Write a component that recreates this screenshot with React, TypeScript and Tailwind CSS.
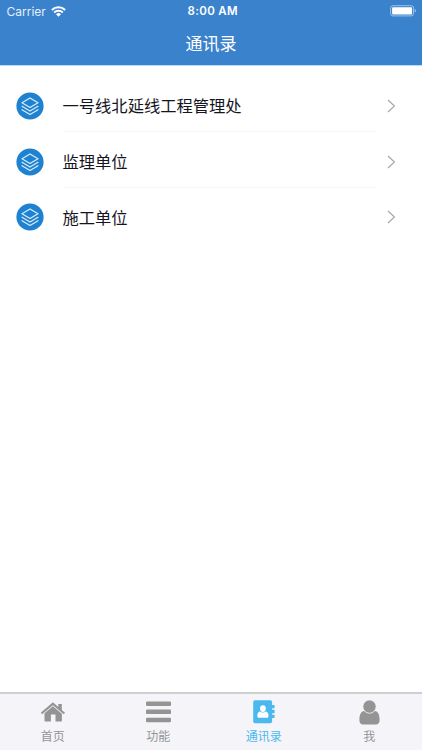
import type { ReactNode } from "react";

const DEPARTMENTS = ["一号线北延线工程管理处", "监理单位", "施工单位"];

function WifiIcon() {
  return (
    <svg width="15" height="11" viewBox="0 0 15 11" fill="none" stroke="#fff">
      <path d="M.9 4a9.3 9.3 0 0 1 13.2 0" strokeWidth="2.1" />
      <path d="M3.2 6.5a6.1 6.1 0 0 1 8.6 0" strokeWidth="1.9" />
      <path d="M7.5 10.7 5 8.3a3.5 3.5 0 0 1 5 0z" fill="#fff" stroke="none" />
    </svg>
  );
}

function BatteryIcon() {
  return (
    <svg width="27" height="12" viewBox="0 0 27 12" fill="none">
      <rect x="0.6" y="0.7" width="23" height="10.2" rx="2.4" stroke="#a5c8ee" strokeWidth="0.9" />
      <rect x="2.1" y="2.2" width="20" height="7.2" rx="0.9" fill="#fff" />
      <path d="M24.7 4.1c1.7.5 1.7 2.9 0 3.4z" fill="#a5c8ee" />
    </svg>
  );
}

function LayersIcon() {
  return (
    <svg width="28" height="28" viewBox="0 0 28 28" fill="none">
      <circle cx="14" cy="14" r="13.6" fill="#1f82d0" />
      <g stroke="#d9edfb" strokeWidth="1.2" strokeLinejoin="round" strokeLinecap="round">
        <path d="M14 5.9 22 10.7 14 15.5 6 10.7z" />
        <path d="M6 14.3 14 19.1l8-4.8" />
        <path d="M6 17.7 14 22.5l8-4.8" />
      </g>
    </svg>
  );
}

function ChevronIcon() {
  return (
    <svg width="9" height="14" viewBox="0 0 9 14" fill="none" stroke="#a8a8a8" strokeWidth="1.2">
      <path d="M1 1l6.4 6L1 13" />
    </svg>
  );
}

function HomeIcon() {
  return (
    <svg width="24" height="20" viewBox="0 0 24 20" fill="#949494">
      <path d="M11.9.3 17.3 4.9V1.9h3.5v6L24 10.7 22.8 12.3 11.9 3.2 1.1 12.3-.1 10.7z" />
      <path d="M11.9 4.2 20.9 11.7v6.8q0 .9-.9.9h-5.5v-7h-4.6v7H4.4q-.9 0-.9-.9v-7.2z" />
    </svg>
  );
}

function MenuIcon() {
  return (
    <svg width="25" height="22" viewBox="0 0 25 22" fill="#949494">
      <rect y="0.4" width="25" height="4.6" rx="1.2" />
      <rect y="8.6" width="25" height="4.5" rx="1.2" />
      <rect y="16.7" width="25" height="4.5" rx="1.2" />
    </svg>
  );
}

function ContactsIcon() {
  return (
    <svg width="22" height="24" viewBox="0 0 22 24" fill="#4bb9ee">
      <rect x="0.2" y="0.3" width="18.9" height="23" rx="1.8" />
      <rect x="18" y="4.9" width="3.6" height="3.4" rx="0.7" />
      <rect x="18" y="9.8" width="3.6" height="3.4" rx="0.7" />
      <rect x="18" y="14.7" width="3.6" height="3.4" rx="0.7" />
      <ellipse cx="9.9" cy="8.6" rx="2.9" ry="3.4" fill="#fff" />
      <path
        d="M7 11.5c1.6 1.4 4.2 1.4 5.8 0 1.9.3 2.7 1.9 2.7 4.5 0 1.2-.5 1.8-1.5 1.8H5.8c-1 0-1.5-.6-1.5-1.8 0-2.6.8-4.2 2.7-4.5z"
        fill="#fff"
      />
    </svg>
  );
}

function PersonIcon() {
  return (
    <svg width="21" height="25" viewBox="0 0 21 25" fill="#949494">
      <path d="M5.1 10.9c3 3.2 7.8 3.2 10.8 0 3.3.4 4.7 3.9 4.7 9 0 2.8-1.3 4.5-3.6 4.5H4C1.7 24.4.4 22.7.4 19.9c0-5.1 1.4-8.6 4.7-9z" />
      <circle cx="10.5" cy="6.6" r="6.6" stroke="#f4f4f9" strokeWidth="0.7" />
    </svg>
  );
}

function Tab({ label, icon, active }: { label: string; icon: ReactNode; active?: boolean }) {
  return (
    <div className="flex flex-1 flex-col items-center pt-[5px]">
      <div className="flex h-[26px] items-center">{icon}</div>
      <span
        className={
          active
            ? "mt-1 text-[12px] leading-4 text-[#4bb9ee]"
            : "mt-1 text-[12px] leading-4 text-[#949494]"
        }
      >
        {label}
      </span>
    </div>
  );
}

export default function App() {
  return (
    <div className="flex h-[750px] w-[422px] flex-col overflow-hidden bg-white font-['Inter','Noto_Sans_CJK_SC',sans-serif]">
      <header className="h-[66px] border-b border-[#b5dcf8] bg-[#3b82cd] text-white">
        <div className="flex h-[22px] items-center">
          <div className="flex flex-1 items-center gap-[5px] pl-[6.5px]">
            <span className="pt-px text-[12px] text-[#e4effa]">Carrier</span>
            <WifiIcon />
          </div>
          <span className="pt-[2px] pl-[2px] text-[11.5px] font-semibold tracking-[0.35px]">8:00 AM</span>
          <div className="flex flex-1 justify-end pr-[5px]">
            <BatteryIcon />
          </div>
        </div>
        <h1 className="pt-px text-center text-[17px] leading-[42px]">通讯录</h1>
      </header>

      <main className="flex-1 pt-[12px]">
        {DEPARTMENTS.map((name, i) => (
          <div key={name} className="flex h-[55.7px] items-center pl-4">
            <LayersIcon />
            <div className="relative ml-[18.5px] flex h-full flex-1 items-center justify-between pr-[26px]">
              <span className="pt-px text-[16.3px] text-[#15151f]">{name}</span>
              <ChevronIcon />
              {i < DEPARTMENTS.length - 1 && (
                <div className="absolute bottom-[1.5px] left-0 h-px w-[314px] bg-[#f5f5f5]" />
              )}
            </div>
          </div>
        ))}
      </main>

      <nav className="flex h-[58px] border-t-2 border-[#cfcfd2] bg-[#f4f4f9]">
        <Tab label="首页" icon={<HomeIcon />} />
        <Tab label="功能" icon={<MenuIcon />} />
        <Tab label="通讯录" icon={<ContactsIcon />} active />
        <Tab label="我" icon={<PersonIcon />} />
      </nav>
    </div>
  );
}
